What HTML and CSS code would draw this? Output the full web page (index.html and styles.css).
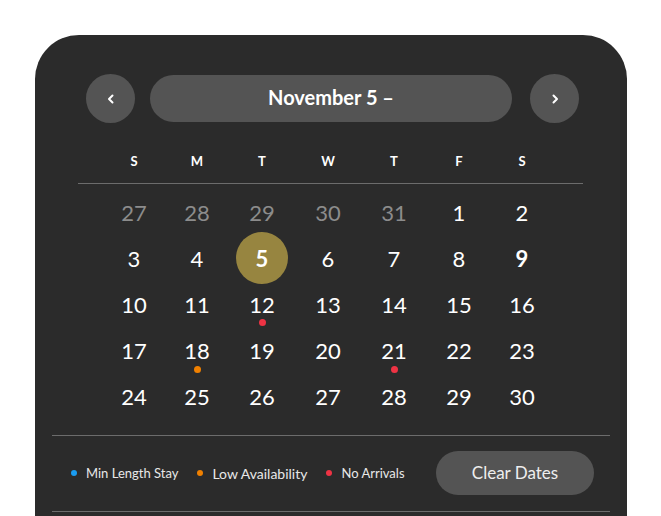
FILE: index.html
```html
<!DOCTYPE html>
<html>
<head>
<meta charset="utf-8">
<link rel="stylesheet" href="styles.css">
</head>
<body>
<div class="card">
  <div class="nav">
    <button class="circle-btn" aria-label="Previous">
      <svg width="12" height="12" viewBox="0 0 12 12"><path d="M7.5 2.5 L4 6 L7.5 9.5" fill="none" stroke="#fff" stroke-width="2" stroke-linecap="round" stroke-linejoin="round"/></svg>
    </button>
    <div class="title">November 5 –</div>
    <button class="circle-btn" aria-label="Next">
      <svg width="12" height="12" viewBox="0 0 12 12"><path d="M4.5 2.5 L8 6 L4.5 9.5" fill="none" stroke="#fff" stroke-width="2" stroke-linecap="round" stroke-linejoin="round"/></svg>
    </button>
  </div>
  <div class="weekdays">
    <span>S</span><span>M</span><span>T</span><span>W</span><span>T</span><span>F</span><span>S</span>
  </div>
  <div class="rule"></div>
  <div class="days">
    <span class="day muted">27</span><span class="day muted">28</span><span class="day muted">29</span><span class="day muted">30</span><span class="day muted">31</span><span class="day">1</span><span class="day">2</span>
    <span class="day">3</span><span class="day">4</span><span class="day"><span class="sel">5</span></span><span class="day">6</span><span class="day">7</span><span class="day">8</span><span class="day bold">9</span>
    <span class="day">10</span><span class="day">11</span><span class="day dot red">12</span><span class="day">13</span><span class="day">14</span><span class="day">15</span><span class="day">16</span>
    <span class="day">17</span><span class="day dot orange">18</span><span class="day">19</span><span class="day">20</span><span class="day dot red">21</span><span class="day">22</span><span class="day">23</span>
    <span class="day">24</span><span class="day">25</span><span class="day">26</span><span class="day">27</span><span class="day">28</span><span class="day">29</span><span class="day">30</span>
  </div>
  <div class="footer">
    <div class="legend">
      <span class="item"><i class="ldot blue"></i>Min Length Stay</span>
      <span class="item big"><i class="ldot orange"></i>Low Availability</span>
      <span class="item"><i class="ldot red"></i>No Arrivals</span>
    </div>
    <button class="clear">Clear Dates</button>
  </div>
</div>
</body>
</html>
```

FILE: styles.css
```css
* { box-sizing: border-box; }
html, body { margin: 0; padding: 0; background: #fff; }
body {
  font-family: "Lato", "Open Sans", sans-serif;
  color: #fff;
  height: 516px;
  overflow: hidden;
}
.card {
  margin: 35px 34px 0 35px;
  width: 592px;
  height: 520px;
  background: #2b2b2b;
  border-radius: 44px 44px 0 0;
  padding: 39px 17px 0 17px;
}
.nav {
  display: flex;
  align-items: center;
  padding: 0 31px 0 34px;
  gap: 15px;
}
.circle-btn {
  width: 49px;
  height: 49px;
  border-radius: 50%;
  border: none;
  background: #545454;
  display: flex;
  align-items: center;
  justify-content: center;
  padding: 0;
  flex: none;
}
.title {
  flex: 1;
  height: 47px;
  margin-right: 3px;
  border-radius: 24px;
  background: #545454;
  display: flex;
  align-items: center;
  justify-content: center;
  padding-bottom: 3px;
  font-weight: 700;
  font-size: 20px;
  color: #fff;
}
.weekdays, .days {
  display: grid;
  grid-template-columns: 62px 64px 66px 66px 66px 64px 62px;
  margin-left: 51px;
}
.weekdays {
  margin-top: 30px;
  height: 16px;
  font-size: 13px;
  font-weight: 700;
  line-height: 16px;
}
.weekdays span { text-align: center; }
.rule {
  height: 1px;
  background: #6c6c6c;
  margin: 14px 27px 0 26px;
}
.days {
  margin-top: 5px;
  grid-auto-rows: 46.2px;
}
.day {
  position: relative;
  display: flex;
  align-items: center;
  justify-content: center;
  font-size: 22px;
  color: #fff;
}
.day.muted { color: #8c8c8c; }
.day.bold { font-weight: 700; }
.sel {
  width: 52px;
  height: 52px;
  border-radius: 50%;
  background: #978540;
  display: flex;
  align-items: center;
  justify-content: center;
  font-weight: 700;
}
.day.dot::after {
  content: "";
  position: absolute;
  left: 50%;
  top: 38px;
  width: 7px;
  height: 7px;
  margin-left: -3.5px;
  border-radius: 50%;
}
.day.red::after { background: #ee3344; }
.day.orange::after { background: #f08000; }
.footer {
  margin-top: 15px;
  border-top: 1px solid #6c6c6c;
  border-bottom: 1px solid #6c6c6c;
  height: 77px;
  display: flex;
  align-items: center;
  justify-content: space-between;
  padding: 0 16px 0 19px;
}
.legend {
  display: flex;
  align-items: center;
  gap: 19px;
}
.item {
  display: flex;
  align-items: center;
  font-size: 13px;
  color: #e8e8e8;
}
.item.big { font-size: 14px; }
.ldot {
  width: 6px;
  height: 6px;
  border-radius: 50%;
  margin-right: 9px;
  display: inline-block;
}
.ldot.blue { background: #1a9cf0; }
.ldot.orange { background: #f08000; }
.ldot.red { background: #ee3344; }
.clear {
  width: 158px;
  height: 44px;
  border: none;
  border-radius: 22px;
  background: #545454;
  color: #eee;
  font-family: inherit;
  font-size: 17px;
  padding: 0 0 2px;
}
```
